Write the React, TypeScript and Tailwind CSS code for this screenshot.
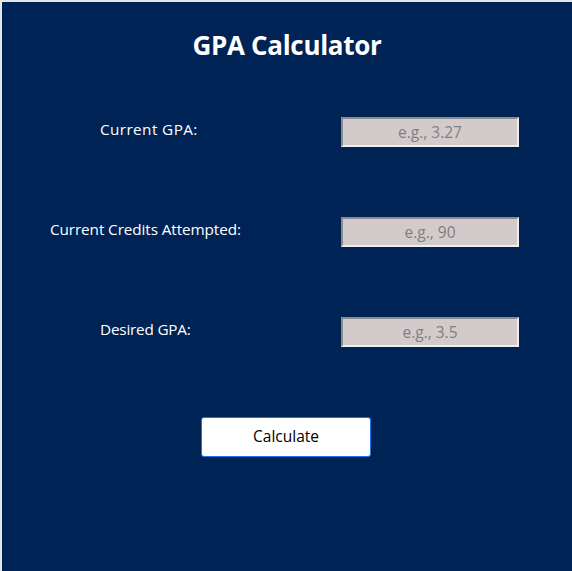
const fields = [
  { label: 'Current GPA:', placeholder: 'e.g., 3.27', pad: 'pl-[98px] tracking-[0.4px]' },
  { label: 'Current Credits Attempted:', placeholder: 'e.g., 90', pad: 'pl-[48px] tracking-[-0.1px]' },
  { label: 'Desired GPA:', placeholder: 'e.g., 3.5', pad: 'pl-[98px] tracking-[-0.2px]' },
];

export default function App() {
  return (
    <div className="w-[572px] h-[571px] bg-[#e6e6e6] pt-[2px] pl-[2px] font-['Open_Sans',sans-serif]">
      <div className="h-full bg-[#002356] text-white flex flex-col">
        <h1 className="text-center text-[26px] font-bold pt-[27px] leading-[32px] tracking-[-0.3px]">
          GPA Calculator
        </h1>

        <div className="flex flex-col gap-[70px] mt-[56px]">
          {fields.map((f) => (
            <div key={f.label} className="flex items-center h-[30px]">
              <label className={`w-[290px] text-[15.3px] leading-[20px] mb-[7px] ${f.pad}`}>{f.label}</label>
              <input
                type="text"
                placeholder={f.placeholder}
                className="ml-[49px] w-[178px] h-[30px] bg-[#d3cbcb] text-center text-[15.5px] text-black placeholder:text-[#808080] border-2 border-t-[#8a8a8a] border-l-[#8a8a8a] border-r-[#eeeeee] border-b-[#eeeeee] outline-none"
              />
            </div>
          ))}
        </div>

        <div className="flex justify-center mt-[70px] pr-[2px]">
          <button className="w-[170px] h-[40px] bg-white text-black text-[15.5px] rounded-[3px] border border-[#1a73e8]">
            Calculate
          </button>
        </div>
      </div>
    </div>
  );
}
